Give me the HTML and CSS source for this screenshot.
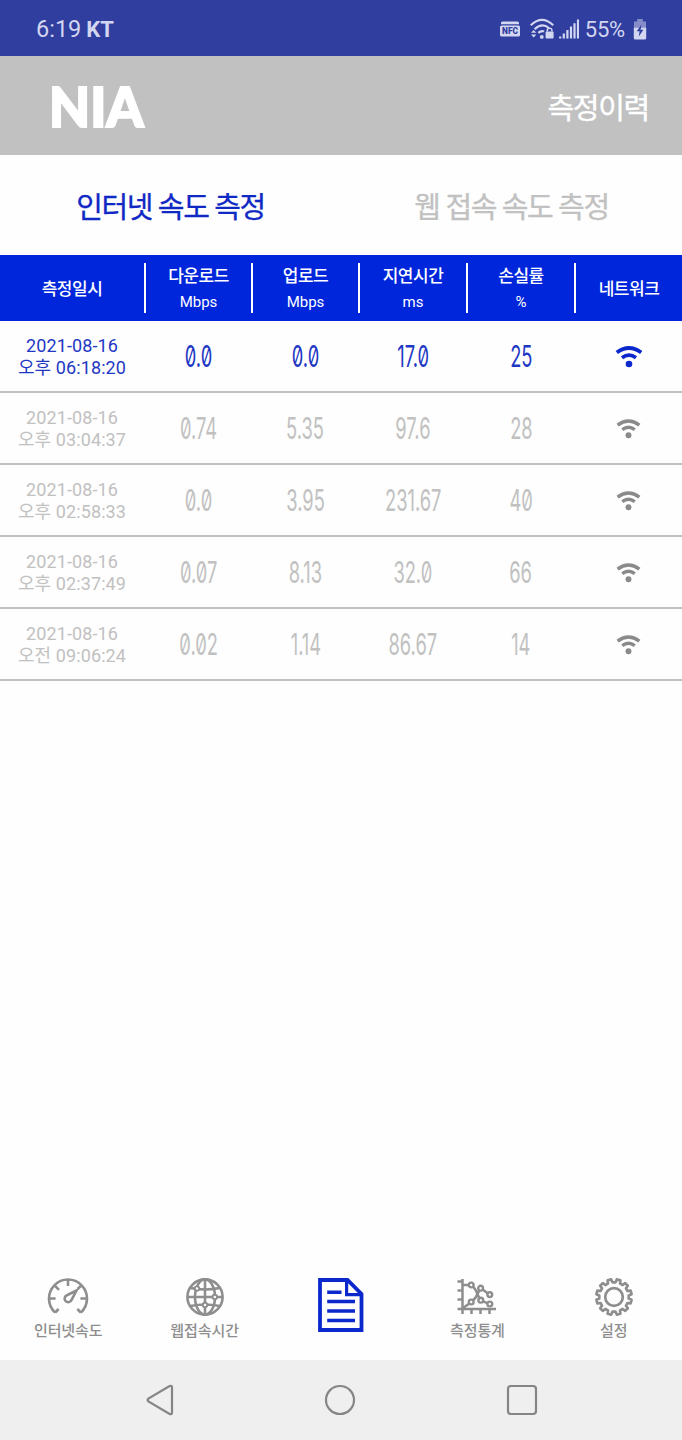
FILE: index.html
```html
<!DOCTYPE html>
<html lang="ko">
<head>
    <meta charset="UTF-8">
    <meta name="viewport" content="width=device-width, initial-scale=1.0">
    <title>측정이력</title>
    <link rel="stylesheet" href="styles.css">
</head>
<body>
    <!-- shared icons -->
    <svg class="symbols" width="0" height="0">
        <symbol id="wifi" viewBox="0 0 28 24">
            <path d="M1.8 7.6Q14-1.6 26.2 7.6" fill="none" stroke="currentColor" stroke-width="3.8"/>
            <path d="M7 12.8Q14 7.4 21 12.8" fill="none" stroke="currentColor" stroke-width="3.8"/>
            <circle cx="14" cy="19" r="3.3" fill="currentColor"/>
        </symbol>
    </svg>

    <div class="status-bar">
        <div class="status-left">
            <span class="clock">6:19</span>
            <span class="carrier">KT</span>
        </div>
        <div class="status-right">
            <svg class="nfc" width="20" height="16" viewBox="0 0 20 16">
                <path d="M1 3.2V2Q1 .4 2.6 .4H17.4Q19 .4 19 2V3.2Z" fill="#d3d6f1"/>
                <rect x="0" y="4.4" width="20" height="11.2" rx="1.6" fill="#d3d6f1"/>
                <text x="10" y="13.2" text-anchor="middle" textLength="16" lengthAdjust="spacingAndGlyphs">NFC</text>
            </svg>
            <svg class="wifi-lock" width="24" height="22" viewBox="0 0 24 22">
                <g fill="none" stroke="#d3d6f1" stroke-width="2.2">
                    <path d="M.8 7.2Q12-3.4 23.2 7.2"/>
                    <path d="M4.6 11.2Q12 4.4 19 10"/>
                    <path d="M8.3 14.8Q11.6 12 14 13.6"/>
                </g>
                <path d="M1 14.8H6.4L3.7 12ZM1 16.4H6.4L3.7 19.4Z" fill="#d3d6f1"/>
                <circle cx="11.8" cy="18.9" r="1.9" fill="#d3d6f1"/>
                <rect x="15.6" y="13.4" width="8" height="7.2" rx="1" fill="#d3d6f1"/>
                <path d="M17.3 13.6V12.2Q17.3 10.2 19.6 10.2T21.9 12.2V13.6" fill="none" stroke="#d3d6f1" stroke-width="1.5"/>
            </svg>
            <svg class="signal" width="20" height="20" viewBox="0 0 20 20">
                <path d="M1.2 19.5V17.4M4.8 19.5V14.4M8.4 19.5V11M12 19.5V7.6M15.5 19.5V4.2M19 19.5V.5" fill="none" stroke="#d3d6f1" stroke-width="2.2"/>
            </svg>
            <span class="percent">55%</span>
            <svg class="battery" width="14" height="21" viewBox="0 0 14 21">
                <path d="M4.2 0H9.8V2.6H13V8.6H1V2.6H4.2Z" fill="#868dc9"/>
                <path d="M.8 8.6H13.2V19Q13.2 20.6 11.6 20.6H2.4Q.8 20.6 .8 19Z" fill="#d3d6f1"/>
                <path d="M8.4 5.6L3.8 12.2H6.6L5.8 17.6L10.4 10.8H7.6Z" fill="#303e9f"/>
            </svg>
        </div>
    </div>

    <header class="header">
        <div class="logo">NIA</div>
        <h1>측정이력</h1>
    </header>

    <div class="tabs">
        <a href="#" class="tab active">인터넷 속도 측정</a>
        <a href="#" class="tab">웹 접속 속도 측정</a>
    </div>

    <main class="history">
        <div class="row table-head">
            <div class="cell">측정일시</div>
            <div class="cell">다운로드<small>Mbps</small></div>
            <div class="cell">업로드<small>Mbps</small></div>
            <div class="cell">지연시간<small>ms</small></div>
            <div class="cell">손실률<small>%</small></div>
            <div class="cell">네트워크</div>
        </div>

        <div class="row record latest">
            <div class="date">2021-08-16<br>오후 06:18:20</div>
            <div class="value">0.0</div>
            <div class="value">0.0</div>
            <div class="value">17.0</div>
            <div class="value">25</div>
            <svg class="wifi"><use href="#wifi"/></svg>
        </div>
        <div class="row record">
            <div class="date">2021-08-16<br>오후 03:04:37</div>
            <div class="value">0.74</div>
            <div class="value">5.35</div>
            <div class="value">97.6</div>
            <div class="value">28</div>
            <svg class="wifi"><use href="#wifi"/></svg>
        </div>
        <div class="row record">
            <div class="date">2021-08-16<br>오후 02:58:33</div>
            <div class="value">0.0</div>
            <div class="value">3.95</div>
            <div class="value">231.67</div>
            <div class="value">40</div>
            <svg class="wifi"><use href="#wifi"/></svg>
        </div>
        <div class="row record">
            <div class="date">2021-08-16<br>오후 02:37:49</div>
            <div class="value">0.07</div>
            <div class="value">8.13</div>
            <div class="value">32.0</div>
            <div class="value">66</div>
            <svg class="wifi"><use href="#wifi"/></svg>
        </div>
        <div class="row record">
            <div class="date">2021-08-16<br>오전 09:06:24</div>
            <div class="value">0.02</div>
            <div class="value">1.14</div>
            <div class="value">86.67</div>
            <div class="value">14</div>
            <svg class="wifi"><use href="#wifi"/></svg>
        </div>
    </main>

    <nav class="bottom-nav">
        <a href="#" class="nav-item">
            <svg width="42" height="42" viewBox="0 0 42 42" fill="none" stroke="currentColor" stroke-width="2.6">
                <path d="M8.2 36.6A19 19 0 1 1 33.8 36.6"/>
                <path d="M8.2 36.6L11.6 33M33.8 36.6L30.4 33M2.5 22.5H8.6M39.5 22.5H33.4M21 3.6V10M7.8 9.6L12 13.8M34.2 9.6L30.6 13"/>
                <path d="M29.5 14.5L20 19.2A3.6 3.6 0 1 0 24.6 23.8Z"/>
            </svg>
            <span>인터넷속도</span>
        </a>
        <a href="#" class="nav-item">
            <svg width="42" height="42" viewBox="0 0 42 42" fill="none" stroke="currentColor" stroke-width="2.6">
                <circle cx="21" cy="21" r="17.6"/>
                <ellipse cx="21" cy="21" rx="10" ry="17.6"/>
                <path d="M21 3.4V38.6M3.4 21H38.6M6.4 12Q21 15 35.6 12M6.4 30Q21 27 35.6 30"/>
                <g fill="#fefefe" stroke-width="1.9">
                    <circle cx="13" cy="12.6" r="2.2"/>
                    <circle cx="30.8" cy="21" r="2.2"/>
                    <circle cx="21" cy="29" r="2.2"/>
                </g>
            </svg>
            <span>웹접속시간</span>
        </a>
        <a href="#" class="nav-item current" aria-label="측정이력">
            <svg width="46" height="54" viewBox="0 0 46 54" fill="none" stroke="currentColor">
                <path d="M2 2H29.5L43.5 16V52H2Z" stroke-width="3.8"/>
                <path d="M28.6 2V16.6H43.5" stroke-width="3.2"/>
                <path d="M9.2 14.2H23.5M9.2 23.5H37M9.2 33H37M9.2 42.5H37" stroke-width="3.4"/>
            </svg>
        </a>
        <a href="#" class="nav-item">
            <svg width="42" height="42" viewBox="0 0 42 42" fill="none" stroke="currentColor" stroke-width="2.5">
                <path d="M6.5 3V33H40M1.5 5.5H6.5M1.5 14.5H6.5M1.5 23.5H6.5M1.5 33H6.5M6.5 33V38M15.5 33V38M24.5 33V38M33.5 33V38"/>
                <path d="M6.5 9H13M17 10.4Q20 14 21.5 18T24 23M27 25.4L32 27.4M7 32L13.4 27.4M16.6 24.8Q19.8 22 21 19T23.4 14.6M26.6 13.4L32 17.4"/>
                <g stroke-width="2.4">
                    <circle cx="15.2" cy="9" r="2.4"/>
                    <circle cx="24.6" cy="12.2" r="2.4"/>
                    <circle cx="33.8" cy="18.6" r="2.4"/>
                    <circle cx="15.2" cy="26" r="2.4"/>
                    <circle cx="24.8" cy="24.2" r="2.4"/>
                    <circle cx="33.8" cy="28" r="2.4"/>
                </g>
            </svg>
            <span>측정통계</span>
        </a>
        <a href="#" class="nav-item">
            <svg width="42" height="42" viewBox="0 0 42 42" fill="none" stroke="currentColor" stroke-width="2.7" stroke-linejoin="round">
                <path id="gearPath"/>
                <circle cx="21" cy="21" r="8.8"/>
            </svg>
            <span>설정</span>
        </a>
    </nav>

    <div class="system-bar">
        <svg width="28" height="32" viewBox="0 0 28 32">
            <path d="M23.6 2Q26 1.2 26 3.6V28.4Q26 30.8 23.6 30L2.4 17.4Q.8 16 2.4 14.6Z"/>
        </svg>
        <svg width="32" height="32" viewBox="0 0 32 32">
            <circle cx="16" cy="16" r="14"/>
        </svg>
        <svg width="32" height="32" viewBox="0 0 32 32">
            <rect x="2" y="2" width="28" height="28" rx="3"/>
        </svg>
    </div>

    <script>
        // Gear outline with 12 teeth
        const teeth = 12;
        const points = [];
        for (let i = 0; i < teeth; i++) {
            [[-0.3, 14.8], [-0.2, 17.8], [0.2, 17.8], [0.3, 14.8]].forEach(function(p) {
                const angle = (i + 0.5 + p[0]) * 2 * Math.PI / teeth;
                points.push((21 + p[1] * Math.sin(angle)).toFixed(2) + ' ' + (21 - p[1] * Math.cos(angle)).toFixed(2));
            });
        }
        document.getElementById('gearPath').setAttribute('d', 'M' + points.join('L') + 'Z');
    </script>
</body>
</html>
```

FILE: styles.css
```css
* {
    margin: 0;
    padding: 0;
    box-sizing: border-box;
}

body {
    font-family: Roboto, 'Noto Sans CJK KR', sans-serif;
    background-color: #fefefe;
    min-height: 100vh;
    display: flex;
    flex-direction: column;
}

a {
    text-decoration: none;
}

.symbols {
    position: absolute;
}

.status-bar {
    height: 56px;
    background-color: #303e9f;
    color: #d3d6f1;
    padding: 2px 35px 0 36px;
    display: flex;
    justify-content: space-between;
    align-items: center;
    font-size: 23px;
}

.status-left, .status-right {
    display: flex;
    align-items: center;
}

.clock {
    font-size: 23.5px;
}

.carrier {
    margin-left: 5px;
    font-size: 22px;
    font-weight: 700;
}

.nfc text {
    fill: #303e9f;
    font-size: 8.5px;
    font-weight: 900;
}

.wifi-lock {
    margin-left: 10px;
}

.signal {
    margin-left: 5px;
}

.percent {
    margin-left: 6px;
    font-size: 22px;
    letter-spacing: -0.2px;
}

.battery {
    margin-left: 8px;
}

.header {
    height: 99px;
    background-color: #c1c1c1;
    color: white;
    padding: 0 33px 0 49px;
    display: flex;
    justify-content: space-between;
    align-items: center;
}

.logo {
    font-family: Lato, sans-serif;
    font-size: 56px;
    font-weight: 900;
    line-height: 1;
    transform: scaleX(0.95);
    transform-origin: left;
    -webkit-text-stroke: 2px white;
}

.header h1 {
    font-size: 29px;
    font-weight: 400;
    letter-spacing: -1.3px;
    -webkit-text-stroke: 0.4px white;
}

.tabs {
    height: 100px;
    display: grid;
    grid-template-columns: 1fr 1fr;
}

.tab {
    display: flex;
    justify-content: center;
    align-items: center;
    color: #c1c1c1;
    font-size: 29px;
    letter-spacing: -1.4px;
    -webkit-text-stroke: 0.3px currentColor;
}

.tab.active {
    color: #1029c4;
}

.row {
    display: grid;
    grid-template-columns: 144px 107px 107px 108px 108px 108px;
    align-items: center;
    justify-items: center;
}

.table-head {
    height: 66px;
    background-color: #0026dc;
    color: white;
}

.cell {
    width: 100%;
    height: 50px;
    padding-top: 1px;
    display: flex;
    flex-direction: column;
    justify-content: center;
    align-items: center;
    gap: 8px;
    font-size: 17px;
    font-weight: 500;
    letter-spacing: -0.5px;
    line-height: 18px;
}

.cell + .cell {
    border-left: 2px solid white;
}

.cell small {
    font-size: 15px;
    font-weight: 400;
    letter-spacing: 0;
}

.record {
    height: 72px;
    border-bottom: 2px solid #c1c1c1;
    color: #c1c1c1;
}

.date {
    padding-top: 2px;
    font-size: 18px;
    line-height: 22px;
    letter-spacing: 0.1px;
    text-align: center;
}

.value {
    margin-left: 2px;
    font-family: Inter, sans-serif;
    font-size: 30px;
    font-weight: 400;
    font-feature-settings: 'zero';
    transform: scaleX(0.61);
}

.wifi {
    width: 25px;
    height: 22px;
    margin: 1px 0 0 1px;
    color: #8a8a8a;
}

.latest {
    color: #1f38c4;
}

.latest .wifi {
    width: 28px;
    height: 24px;
    color: #0b28cc;
}

.bottom-nav {
    height: 94px;
    margin-top: auto;
    display: grid;
    grid-template-columns: repeat(5, 1fr);
}

.nav-item {
    display: flex;
    flex-direction: column;
    align-items: center;
    gap: 2px;
    padding-top: 10px;
    color: #8e8e8e;
    font-size: 15px;
    font-weight: 500;
    line-height: 22px;
    letter-spacing: -0.1px;
}

.nav-item.current {
    padding-top: 12px;
    color: #0b28cc;
}

.system-bar {
    height: 80px;
    background-color: #efefef;
    padding: 0 144px 0 146px;
    display: flex;
    justify-content: space-between;
    align-items: center;
}

.system-bar svg {
    fill: none;
    stroke: #858585;
    stroke-width: 2.2;
}
```
